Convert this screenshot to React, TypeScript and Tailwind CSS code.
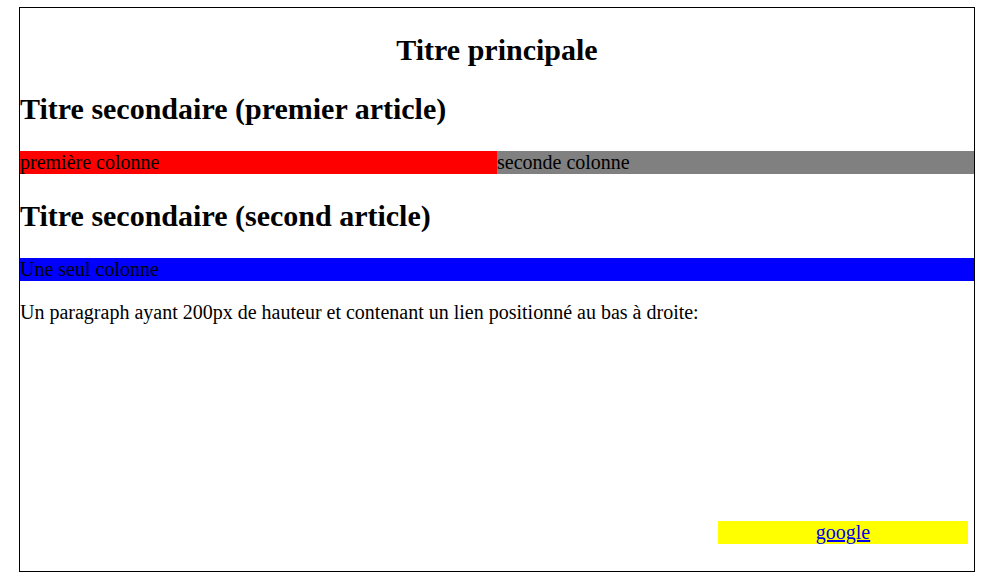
export default function App() {
  return (
    <div className="min-h-[584px] bg-white pt-[7px] pl-[19px] font-['Liberation_Serif','Times_New_Roman',serif] text-[20px] leading-[23px] text-black">
      <div className="flex h-[565px] w-[956px] flex-col border border-black">
        <h1 className="mt-[24px] text-center text-[30px] font-bold leading-[35px]">Titre principale</h1>

        {/* premier article */}
        <h2 className="mt-[24px] text-[30px] font-bold leading-[35px]">Titre secondaire (premier article)</h2>
        <div className="mt-[25px] grid h-[23px] grid-cols-2">
          <div className="bg-[#ff0000]">première colonne</div>
          <div className="bg-[#808080]">seconde colonne</div>
        </div>

        {/* second article */}
        <h2 className="mt-[24px] text-[30px] font-bold leading-[35px]">Titre secondaire (second article)</h2>
        <div className="mt-[25px] h-[23px] bg-[#0000ff]">Une seul colonne</div>

        <div className="mt-[20px] flex h-[250px] flex-col">
          <p>Un paragraph ayant 200px de hauteur et contenant un lien positionné au bas à droite:</p>
          <div className="mt-auto flex justify-end pr-[6px] pb-[7px]">
            <a href="#" className="block h-[23px] w-[250px] bg-[#ffff00] text-center text-[#0000ee] underline">
              google
            </a>
          </div>
        </div>
      </div>
    </div>
  );
}
